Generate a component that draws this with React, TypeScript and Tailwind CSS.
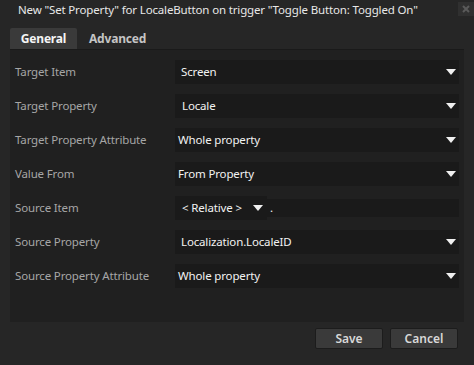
import React from "react";

const Arrow = () => (
  <svg width="10" height="6" viewBox="0 0 10 6" className="shrink-0">
    <path d="M0 0 H10 L5 6 Z" fill="#f0f0f0" />
  </svg>
);

const Dropdown = ({ value, pl }: { value: string; pl: string }) => (
  <div className={`flex h-[24px] w-[284px] items-center justify-between bg-[#1a1a1a] pr-[3px] ${pl}`}>
    <span className="text-[11.5px] tracking-[-0.15px] text-[#f2f2f2]">{value}</span>
    <Arrow />
  </div>
);

const Row = ({ label, children }: { label: string; children: React.ReactNode }) => (
  <div className="flex h-[24px] items-center">
    <div className="w-[160px] text-[11.5px] tracking-[-0.15px] text-[#a6a6a6]">{label}</div>
    {children}
  </div>
);

export default function App() {
  return (
    <div
      className="flex h-[365px] w-[474px] flex-col bg-[#262626]"
      style={{ fontFamily: '"Noto Sans", "Open Sans", sans-serif' }}
    >
      <div className="flex h-[20px] items-center justify-between pl-[18px] pr-0">
        <span className="text-[11.5px] tracking-[-0.15px] text-[#e8e8e8]">
          New "Set Property" for LocaleButton on trigger "Toggle Button: Toggled On"
        </span>
        <div className="mt-[2px] flex h-[14px] w-[16px] items-center justify-center self-start bg-[#303030]">
          <svg width="8" height="8" viewBox="0 0 8 8">
            <path d="M1 1 L7 7 M7 1 L1 7" stroke="#5a5a5a" strokeWidth="2" />
          </svg>
        </div>
      </div>
      <div className="mt-[8px] flex h-[21px] px-[10px]">
        <div className="flex w-[67px] items-center justify-center rounded-t-[2px] bg-[#3a3a3a] text-[12px] font-bold tracking-[-0.2px] text-[#f5f5f5]">
          General
        </div>
        <div className="flex items-center pl-[12px] text-[12px] font-bold tracking-[-0.2px] text-[#c4c4c4]">Advanced</div>
      </div>
      <div className="mx-[10px] flex h-[273px] w-[454px] flex-col gap-[10px] border-t border-[#1a1a1a] bg-[#202020] pl-[5px] pt-[10px]">
        <Row label="Target Item">
          <Dropdown value="Screen" pl="pl-[6px]" />
        </Row>
        <Row label="Target Property">
          <Dropdown value="Locale" pl="pl-[7px]" />
        </Row>
        <Row label="Target Property Attribute">
          <Dropdown value="Whole property" pl="pl-[3px]" />
        </Row>
        <Row label="Value From">
          <Dropdown value="From Property" pl="pl-[3px]" />
        </Row>
        <Row label="Source Item">
          <div className="flex h-[24px] w-[284px] items-center">
            <div className="flex h-[24px] w-[92px] items-center justify-between bg-[#1a1a1a] pl-[7px] pr-[4px]">
              <span className="text-[11.5px] tracking-[-0.15px] text-[#f2f2f2]">&lt; Relative &gt;</span>
              <Arrow />
            </div>
            <div className="flex h-[18px] flex-1 items-center bg-[#1a1a1a] pl-[3px] text-[11.5px] text-[#f2f2f2]">.</div>
          </div>
        </Row>
        <Row label="Source Property">
          <Dropdown value="Localization.LocaleID" pl="pl-[6px]" />
        </Row>
        <Row label="Source Property Attribute">
          <Dropdown value="Whole property" pl="pl-[3px]" />
        </Row>
      </div>
      <div className="mt-[6px] flex justify-end gap-[7px] pr-[16px]">
        <button className="h-[21px] w-[68px] rounded-[2px] border border-[#1c1c1c] bg-[#3a3a3a] text-[12px] font-semibold text-[#d8d8d8]">
          Save
        </button>
        <button className="h-[21px] w-[68px] rounded-[2px] border border-[#1c1c1c] bg-[#3a3a3a] text-[12px] font-semibold text-[#d8d8d8]">
          Cancel
        </button>
      </div>
    </div>
  );
}
